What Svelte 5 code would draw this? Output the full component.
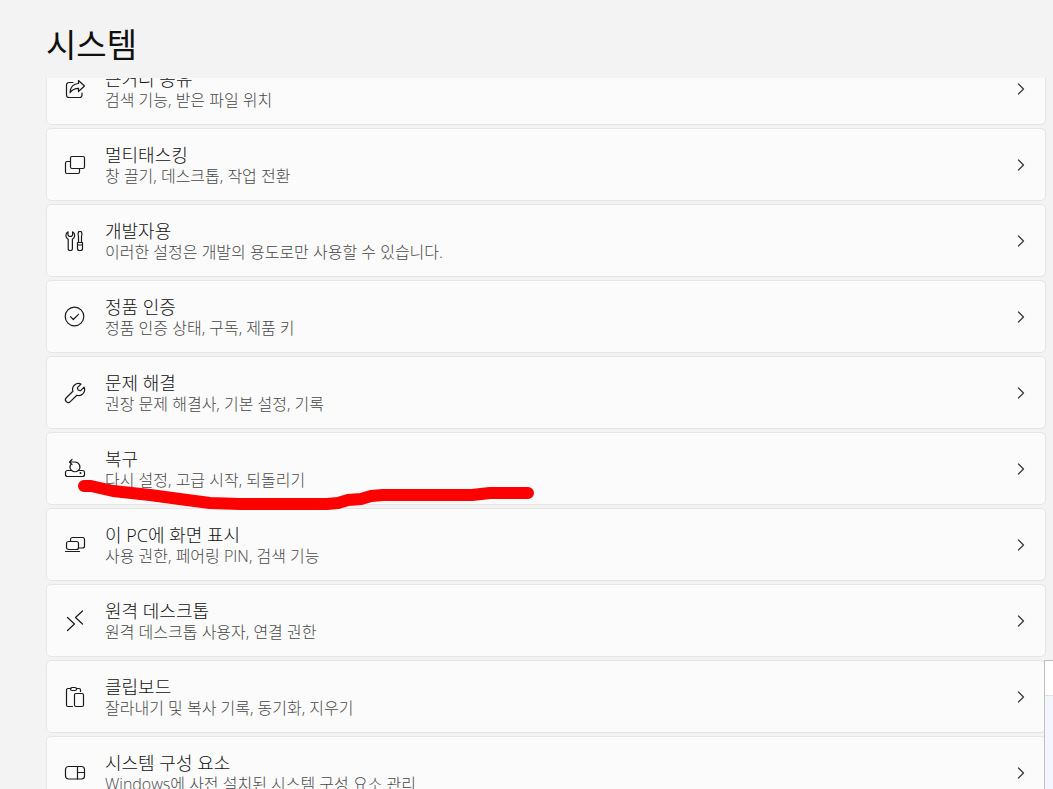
<script lang="ts">
  type IconName =
    | 'share'
    | 'windows'
    | 'tools'
    | 'check'
    | 'wrench'
    | 'recovery'
    | 'project'
    | 'remote'
    | 'clipboard'
    | 'components';

  type Item = { icon: IconName; title: string; detail: string };

  const items: Item[] = [
    { icon: 'share', title: '근거리 공유', detail: '검색 기능, 받은 파일 위치' },
    { icon: 'windows', title: '멀티태스킹', detail: '창 끌기, 데스크톱, 작업 전환' },
    { icon: 'tools', title: '개발자용', detail: '이러한 설정은 개발의 용도로만 사용할 수 있습니다.' },
    { icon: 'check', title: '정품 인증', detail: '정품 인증 상태, 구독, 제품 키' },
    { icon: 'wrench', title: '문제 해결', detail: '권장 문제 해결사, 기본 설정, 기록' },
    { icon: 'recovery', title: '복구', detail: '다시 설정, 고급 시작, 되돌리기' },
    { icon: 'project', title: '이 PC에 화면 표시', detail: '사용 권한, 페어링 PIN, 검색 기능' },
    { icon: 'remote', title: '원격 데스크톱', detail: '원격 데스크톱 사용자, 연결 권한' },
    { icon: 'clipboard', title: '클립보드', detail: '잘라내기 및 복사 기록, 동기화, 지우기' },
    { icon: 'components', title: '시스템 구성 요소', detail: 'Windows에 사전 설치된 시스템 구성 요소 관리' },
  ];
</script>

{#snippet glyph(name: IconName)}
  <svg class="icon" viewBox="0 0 24 24" aria-hidden="true">
    {#if name === 'share'}
      <path d="M10 5.5H6A2.5 2.5 0 0 0 3.5 8v10A2.5 2.5 0 0 0 6 20.5h10.5a2.5 2.5 0 0 0 2.5-2.5v-2" />
      <path d="M15.5 3.5 21.5 9l-6 5.5v-3.2c-4 0-6.3 1.4-8.5 4.4.4-5 3.2-9 8.5-9.2z" />
    {:else if name === 'windows'}
      <rect x="7.5" y="3.5" width="14" height="12" rx="1.5" />
      <path d="M7.5 8.5H4A1.5 1.5 0 0 0 2.5 10v9A1.5 1.5 0 0 0 4 20.5h11a1.5 1.5 0 0 0 1.5-1.5v-3.5" />
    {:else if name === 'tools'}
      <path d="M5 2.8C3.7 3.5 2.9 4.8 2.9 6.5c0 1.6.9 2.9 2.3 3.7v9.2a2 2 0 0 0 4.2 0v-9.2c1.4-.8 2.3-2.1 2.3-3.7 0-1.7-.8-3-2.1-3.7v3.4L8.5 7.3H6.1L5 6.2z" />
      <path d="M15.5 13.5v-6L15 5l.8-2.5h2.4L19 5l-.5 2.5v6M14.5 13.5h5v6a2 2 0 0 1-2 2h-1a2 2 0 0 1-2-2zM14.5 16h5" />
    {:else if name === 'check'}
      <circle cx="11.5" cy="11.5" r="9.3" />
      <path d="m7.5 11.7 2.8 2.8 5.2-5.2" />
    {:else if name === 'wrench'}
      <path d="M18 3.1A5.9 5.9 0 0 0 9.9 10.3L3.3 16.7a2.8 2.8 0 0 0 4 4l6.6-6.5A5.9 5.9 0 0 0 21.1 6.2L17.6 9.7 15.1 9l-.7-2.4z" />
    {:else if name === 'recovery'}
      <path d="M6.5 5H12a4.9 4.9 0 0 1 3.5 8.3M8.4 13.3a4.9 4.9 0 0 1-.9-5.5M9 2.5 6.5 5 9 7.5" />
      <path d="M8.7 13.5H4.5a2 2 0 0 0-2 2v2a2 2 0 0 0 2 2h15a2 2 0 0 0 2-2v-2a2 2 0 0 0-2-2h-4.2M8.7 13.5c1.8 1.6 4.8 1.6 6.6 0" />
      <circle class="dot" cx="17.5" cy="16" r="1" />
    {:else if name === 'project'}
      <path d="M7.5 8.5v-2a2 2 0 0 1 2-2h10a2 2 0 0 1 2 2V13a2 2 0 0 1-2 2h-4" />
      <rect x="3.5" y="8.5" width="12" height="8" rx="2" />
      <path d="M2.5 18.5h14" />
    {:else if name === 'remote'}
      <path d="m4.5 8.5 7 6.5-7 6.5M19.5 2l-7 6.5 7 6.5" />
    {:else if name === 'clipboard'}
      <path d="M8 3.5H5A1.5 1.5 0 0 0 3.5 5v15A1.5 1.5 0 0 0 5 21.5h4.5M13.5 3.5H16A1.5 1.5 0 0 1 17.5 5v1.5" />
      <rect x="7.5" y="2.5" width="6" height="3" rx="1.5" />
      <rect x="11.5" y="8.5" width="9" height="13" rx="1.5" />
    {:else if name === 'components'}
      <rect x="2.5" y="5.5" width="19" height="12.5" rx="3" />
      <path d="M14.5 5.5V18M14.5 11.5h7" />
    {/if}
  </svg>
{/snippet}

<main class="page">
  <h1>시스템</h1>

  <div class="scroller">
    <ul>
      {#each items as item (item.icon)}
        <li>
          <a class="card" href="#{item.icon}">
            {@render glyph(item.icon)}
            <span class="text">
              <span class="title">{item.title}</span>
              <span class="detail">{item.detail}</span>
            </span>
            <svg class="chevron" viewBox="0 0 12 12" aria-hidden="true">
              <path d="m3.5 1 5 5-5 5" />
            </svg>
          </a>
        </li>
      {/each}
    </ul>
  </div>

  <!-- hand-drawn marker under the recovery row -->
  <svg class="marker" viewBox="0 0 460 36" aria-hidden="true">
    <path d="M9 12h7l22 5 37 4 37 5 23 3 30 1h87l11-1 10-3 13-1 10-3 12-1h89l18-2h38" />
  </svg>

  <!-- corner of the window lying over the page -->
  <div class="overlap" aria-hidden="true"></div>
</main>

<style>
  :global(body) {
    background: #f3f3f3;
  }
  .page {
    position: relative;
    display: flex;
    flex-direction: column;
    box-sizing: border-box;
    height: 100vh;
    padding: 0 7px 0 46px;
    overflow: hidden;
    color: #101010;
    font-family: 'Open Sans', 'Noto Sans CJK KR', sans-serif;
    font-weight: 300;
  }
  h1 {
    flex: none;
    margin: 0;
    padding: 21px 0 9px;
    font-size: 33px;
    font-weight: 400;
    line-height: 48px;
  }
  .scroller {
    flex: 1;
    min-height: 0;
    overflow: hidden;
  }
  ul {
    display: flex;
    flex-direction: column;
    gap: 3px;
    margin: -26px 0 0;
    padding: 0;
    list-style: none;
  }
  .card {
    display: flex;
    align-items: center;
    box-sizing: border-box;
    min-height: 73px;
    padding: 0 18px 0 16px;
    border: 1px solid #e5e5e5;
    border-radius: 5px;
    background: #fbfbfb;
    color: inherit;
    text-decoration: none;
  }
  .card:hover {
    background: #f6f6f6;
  }
  .icon {
    flex: none;
    width: 24px;
    height: 24px;
    margin-right: 18px;
  }
  .icon,
  .chevron,
  .marker {
    fill: none;
    stroke: #1b1b1b;
    stroke-width: 1.2;
    stroke-linecap: round;
    stroke-linejoin: round;
  }
  .dot {
    fill: #1b1b1b;
    stroke: none;
  }
  .text {
    display: flex;
    flex: 1;
    flex-direction: column;
    gap: 1px;
    min-width: 0;
    padding-top: 2px;
  }
  .title {
    font-size: 18px;
    line-height: 20px;
  }
  .detail {
    color: #484848;
    font-size: 16px;
    line-height: 20px;
  }
  .chevron {
    flex: none;
    width: 12px;
    height: 12px;
    stroke: #404040;
    stroke-width: 1.4;
  }
  .marker {
    position: absolute;
    top: 474px;
    left: 75px;
    width: 460px;
    height: 36px;
    stroke: #ff0000;
    stroke-width: 12;
    pointer-events: none;
  }
  .overlap {
    position: absolute;
    top: 660px;
    right: 0;
    bottom: 0;
    width: 8px;
    border-top: 1px solid #c0c0c0;
    border-left: 1px solid #c0c0c0;
    background: linear-gradient(#fff 34px, #e2e2e6 34px, #e2e2e6 35px, #f4f6fd 35px);
  }
</style>
